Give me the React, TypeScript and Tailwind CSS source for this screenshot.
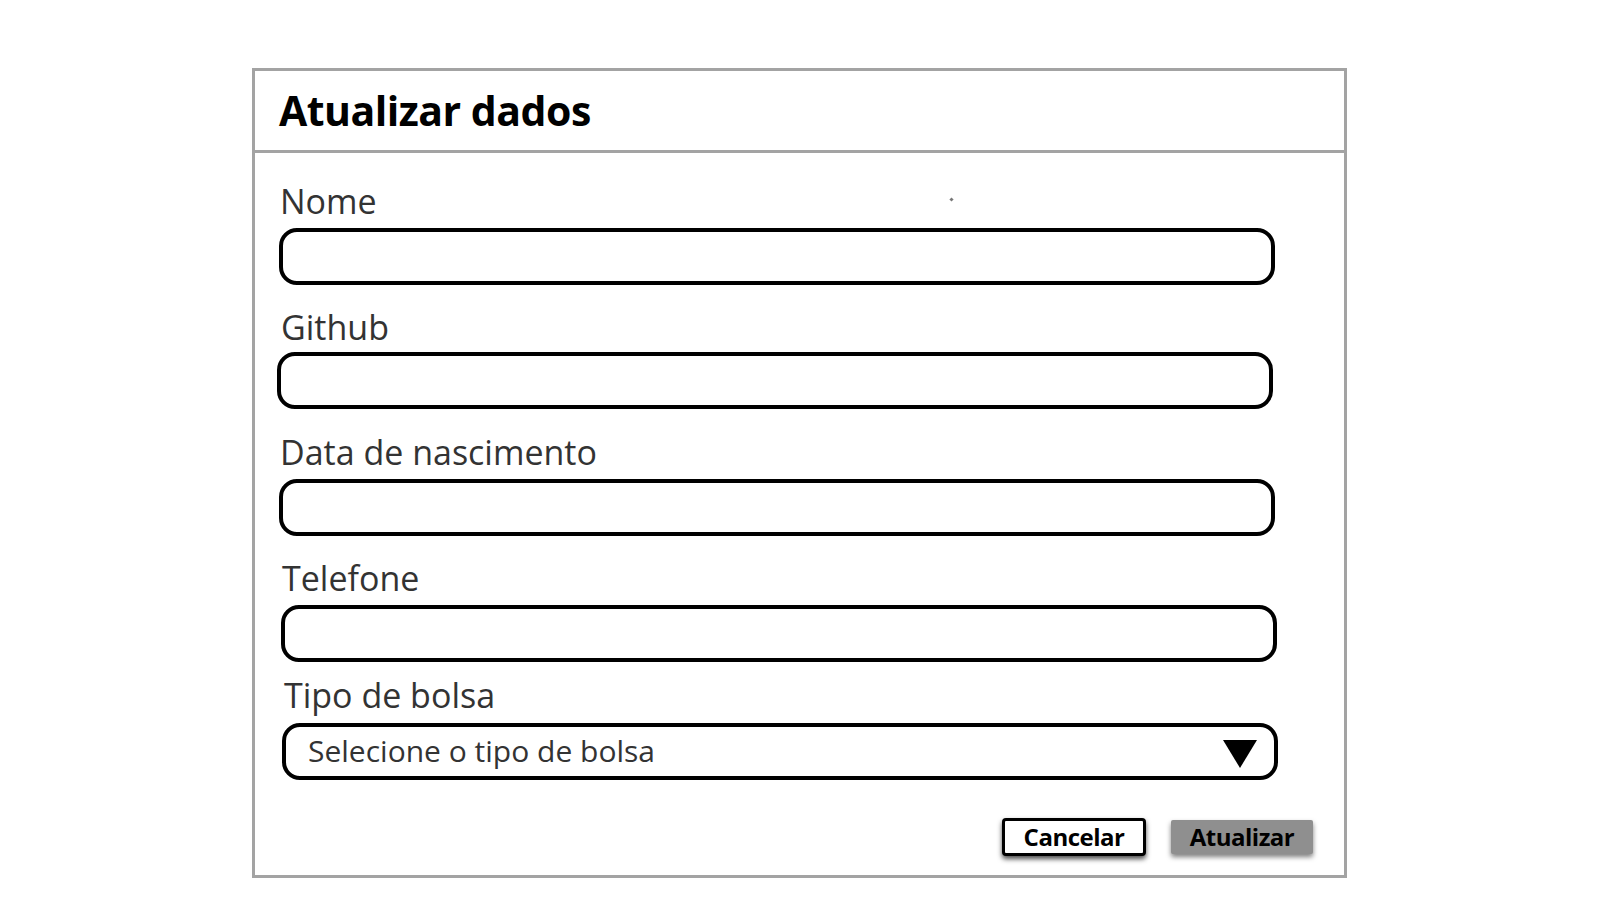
const font = { fontFamily: '"Open Sans", "Noto Sans", "Liberation Sans", sans-serif' };

function Field({ label, labelClass, boxClass }: { label: string; labelClass: string; boxClass: string }) {
  return (
    <div>
      <div className={`text-[34px] leading-[40px] text-[#333] ${labelClass}`}>{label}</div>
      <div className={`w-[996px] h-[57px] border-[4px] border-black rounded-[18px] bg-white ${boxClass}`} />
    </div>
  );
}

export default function App() {
  return (
    <div className="min-h-screen w-full bg-white pt-[68px]" style={font}>
      <div className="relative mx-auto w-[1095px] h-[810px] border-[3px] border-[#a3a3a3] bg-white flex flex-col">
        {/* header */}
        <div className="h-[82px] border-b-[3px] border-[#a3a3a3] flex items-center pl-[24px]">
          <h1 className="text-[41px] leading-none font-bold text-black tracking-[-0.5px]">Atualizar dados</h1>
        </div>

        <span className="absolute left-[695px] top-[127px] w-[3px] h-[3px] bg-[#777] rotate-45" />

        {/* form */}
        <div className="flex flex-col pl-[24px] pt-[28px]">
          <Field label="Nome" labelClass="pl-[1px] mb-[7px]" boxClass="" />
          <Field label="Github" labelClass="pl-[2px] mt-[22px] mb-[5px] text-[#111]" boxClass="-ml-[2px]" />
          <Field label="Data de nascimento" labelClass="pl-[1px] mt-[23px] mb-[7px]" boxClass="" />
          <Field label="Telefone" labelClass="pl-[3px] mt-[22px] mb-[7px]" boxClass="ml-[2px]" />

          <div className="text-[34px] leading-[40px] text-[#333] pl-[5px] mt-[13px] mb-[8px]">Tipo de bolsa</div>
          <div className="ml-[3px] w-[996px] h-[57px] border-[4px] border-black rounded-[18px] bg-white flex items-center justify-between pl-[22px] pr-[17px]">
            <span className="text-[30px] leading-none text-[#333] -mt-[2px]">Selecione o tipo de bolsa</span>
            <svg width="34" height="28" viewBox="0 0 34 28" className="mt-[4px]">
              <polygon points="0,0 34,0 17,28" fill="#000" />
            </svg>
          </div>
        </div>

        {/* actions */}
        <div className="flex items-center justify-end gap-[25px] pr-[31px] mt-[38px]">
          <button className="w-[144px] h-[38px] border-[3px] border-black rounded-[4px] bg-white text-[24px] font-bold text-black leading-none shadow-[0_3px_5px_rgba(0,0,0,0.7)] tracking-[-0.5px]">
            Cancelar
          </button>
          <button className="w-[142px] h-[34px] rounded-[2px] bg-[#8f8f8f] text-[24px] font-bold text-black leading-none shadow-[0_3px_5px_rgba(0,0,0,0.5)] tracking-[-0.5px]">
            Atualizar
          </button>
        </div>
      </div>
    </div>
  );
}
